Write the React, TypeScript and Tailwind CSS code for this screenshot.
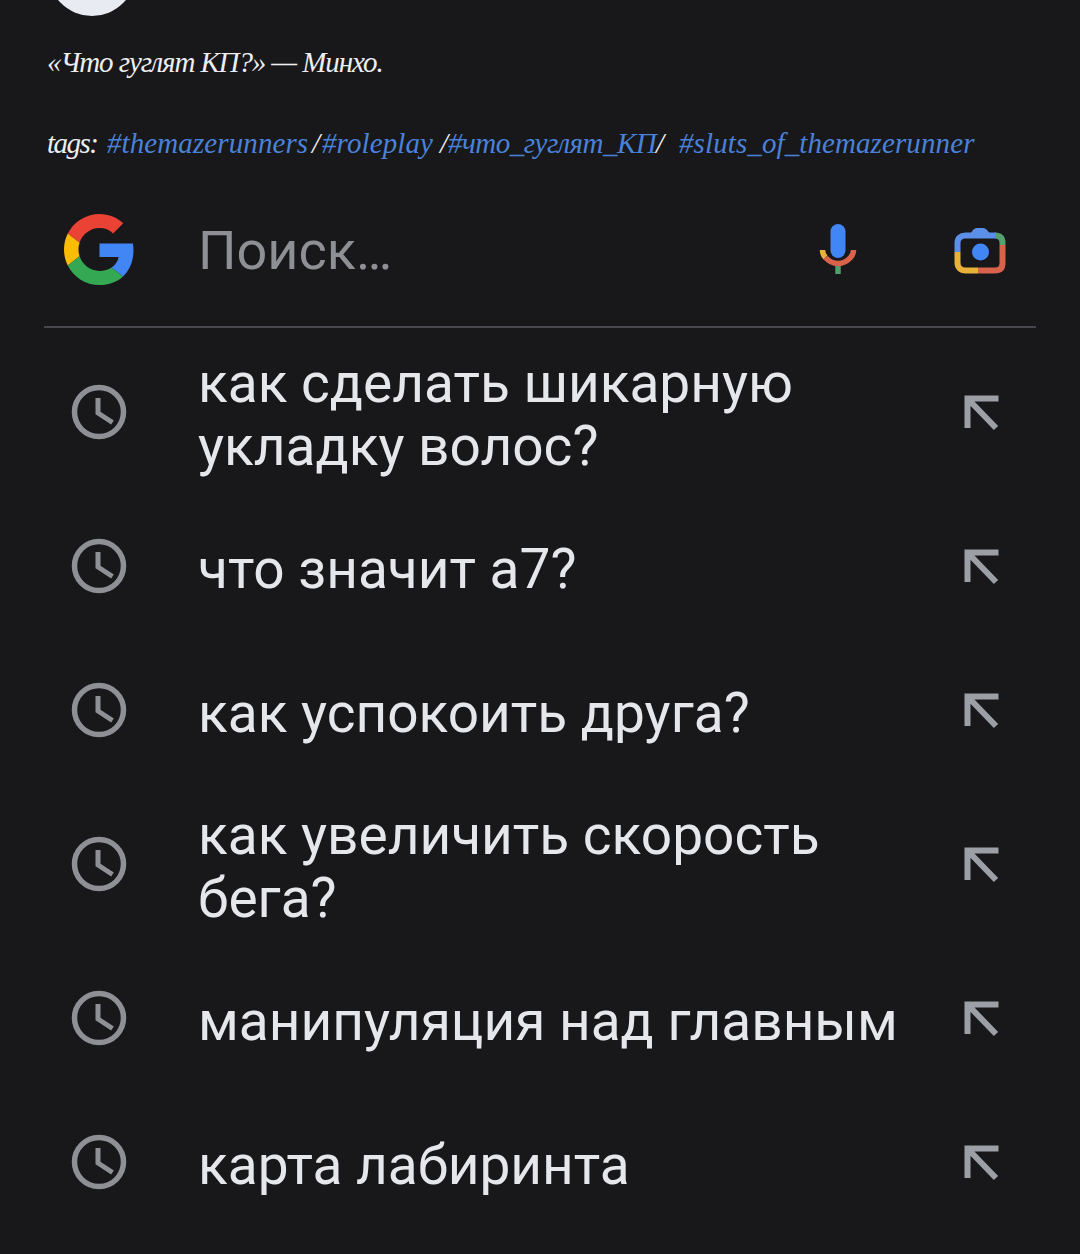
const rows = [
  { text: "как сделать шикарную укладку волос?", tall: true },
  { text: "что значит а7?", tall: false },
  { text: "как успокоить друга?", tall: false },
  { text: "как увеличить скорость бега?", tall: true },
  { text: "манипуляция над главным", tall: false },
  { text: "карта лабиринта", tall: false },
];

function GoogleG() {
  return (
    <svg viewBox="0 0 48 48" className="w-[71px] h-[71px] shrink-0">
      <path fill="#EA4335" d="M24 9.5c3.54 0 6.71 1.22 9.21 3.6l6.85-6.85C35.9 2.38 30.47 0 24 0 14.62 0 6.51 5.38 2.56 13.22l7.98 6.19C12.43 13.72 17.74 9.5 24 9.5z" />
      <path fill="#4285F4" d="M46.98 24.55c0-1.57-.15-3.09-.38-4.55H24v9.02h12.94c-.58 2.96-2.26 5.48-4.78 7.18l7.73 6c4.51-4.18 7.09-10.36 7.09-17.65z" />
      <path fill="#FBBC05" d="M10.53 28.59c-.48-1.45-.76-2.99-.76-4.59s.27-3.14.76-4.59l-7.98-6.19C.92 16.46 0 20.12 0 24c0 3.88.92 7.54 2.56 10.78l7.97-6.19z" />
      <path fill="#34A853" d="M24 48c6.48 0 11.93-2.13 15.89-5.81l-7.73-6c-2.15 1.45-4.92 2.3-8.16 2.3-6.26 0-11.57-4.22-13.47-9.91l-7.98 6.19C6.51 42.62 14.62 48 24 48z" />
    </svg>
  );
}

function Mic() {
  return (
    <svg viewBox="0 0 38 54" className="w-[38px] h-[54px] block">
      <path d="M19 43v8" stroke="#4f9d68" strokeWidth="5.500" fill="none" />
      <path d="M3.500 27c0 3 1 5.500 3 7.500" stroke="#e8b13a" strokeWidth="5.500" fill="none" />
      <path d="M6.500 34.500c3 3.500 7.500 6 12.500 6s9.500-2.500 12.500-6c2-2 3-4.500 3-7.500" stroke="#d9624a" strokeWidth="5.500" fill="none" />
      <rect x="11.500" y="1" width="15" height="34" rx="7.500" fill="#4285F4" />
    </svg>
  );
}

function Camera() {
  return (
    <svg viewBox="0 0 52 48" className="w-[52px] h-[48px] block">
      <path d="M3.500 26V17c0-5 3-7.500 8-7.500H42" stroke="#5b8fe8" strokeWidth="6" fill="none" />
      <path d="M14 11l5-7c1-1 2-2 4-2h6c2 0 3 1 4 2l6 7z" fill="#5b8fe8" />
      <path d="M41 9.500c5 0 7.500 2.500 7.500 7.500v2" stroke="#55a06f" strokeWidth="6" fill="none" />
      <path d="M48.500 19v18c0 5-2.500 7.500-7.500 7.500H24" stroke="#d9624a" strokeWidth="6" fill="none" />
      <path d="M24 44.500H11.500c-5 0-8-3-8-8V26" stroke="#e8b13a" strokeWidth="6" fill="none" />
      <circle cx="26.500" cy="26" r="8.500" fill="#4285F4" />
    </svg>
  );
}

function Clock() {
  return (
    <svg viewBox="0 0 56 56" className="w-[56px] h-[56px] block -mt-[6px]">
      <circle cx="28" cy="28" r="24.500" stroke="#8f9095" strokeWidth="5.500" fill="none" />
      <path d="M27 14v15l14.500 9.500" stroke="#8f9095" strokeWidth="5" fill="none" />
    </svg>
  );
}

function Arrow() {
  return (
    <svg viewBox="0 0 36 36" className="w-[36px] h-[36px] block -mt-[4px]">
      <path d="M3.500 33V3.500h31M4.500 4.500L32 33" stroke="#9c9fa6" strokeWidth="6" fill="none" />
    </svg>
  );
}

const hand = "font-['Liberation_Serif',serif] italic";

export default function App() {
  return (
    <div className="h-[1254px] w-[1080px] overflow-hidden bg-[#18171a] font-['Roboto',sans-serif]">
      <div className="ml-[48px] -mt-[72px] h-[88px] w-[88px] rounded-full bg-[#e9ebf3]" />

      <p className={`${hand} mt-[28px] ml-[47px] h-[36px] text-[29px] leading-[36px] tracking-[-1.1px] text-[#eceef0]`}>
        «Что гуглят КП?» — Минхо.
      </p>

      <p className={`${hand} mt-[45px] ml-[47px] flex h-[36px] whitespace-nowrap text-[29px] leading-[36px] tracking-[0.1px] text-[#eceef0]`}>
        <span className="w-[60px] tracking-[-1.5px]">tags:</span>
        <span className="w-[205px] text-[#4a82d8]">#themazerunners</span>
        <span className="w-[10px]">/</span>
        <span className="w-[118px] text-[#4a82d8]">#roleplay</span>
        <span className="w-[8px]">/</span>
        <span className="w-[208px] text-[#4a82d8] tracking-[-0.5px]">#что_гуглят_КП</span>
        <span className="w-[23px]">/</span>
        <span className="text-[#4a82d8]">#sluts_of_themazerunner</span>
      </p>

      <div className="mt-[53px] ml-[64px] mr-[74px] flex h-[71px] items-center">
        <GoogleG />
        <span className="ml-[63px] flex-1 text-[54px] leading-[64px] text-[#8f9095] translate-y-[1px]">Поиск…</span>
        <div className="mr-[97px]"><Mic /></div>
        <Camera />
      </div>

      <div className="mx-[44px] mt-[41px] h-[2px] bg-[#47484d]" />

      <div className="mt-[5px]">
        {rows.map((r) => (
          <div key={r.text} className={`flex items-center pl-[71px] pr-[80px] ${r.tall ? "h-[164px]" : "h-[144px]"}`}>
            <Clock />
            <div className="ml-[71px] flex-1 text-[55px] leading-[63px] text-[#e6e7eb]">
              <span className={r.tall ? "block w-[650px]" : "block whitespace-nowrap"}>{r.text}</span>
            </div>
            <Arrow />
          </div>
        ))}
      </div>
    </div>
  );
}
